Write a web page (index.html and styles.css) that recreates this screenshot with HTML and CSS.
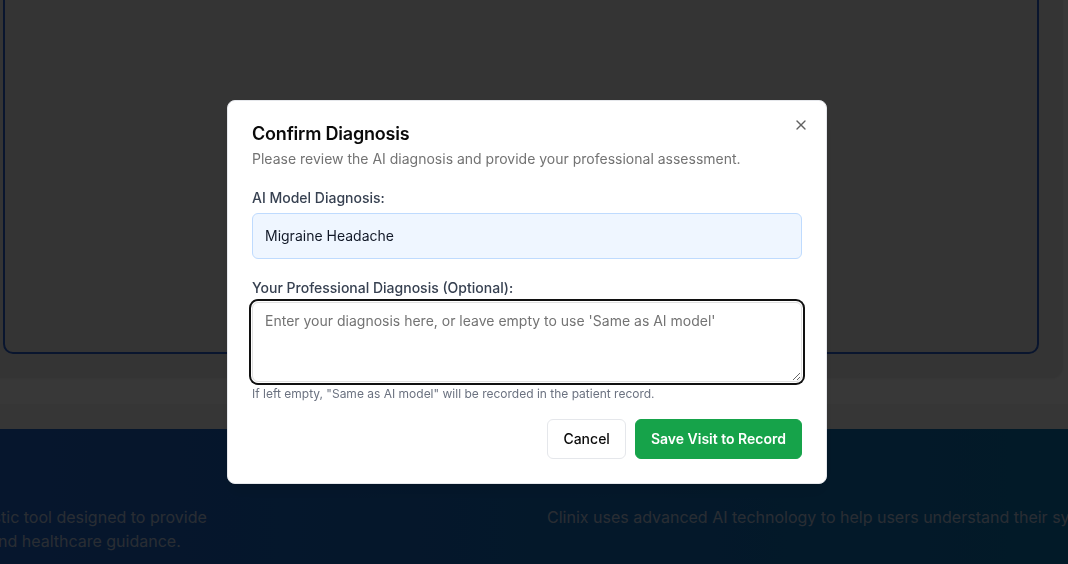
FILE: index.html
```html
<!DOCTYPE html>
<html lang="en">
<head>
<meta charset="utf-8">
<title>Confirm Diagnosis</title>
<link rel="stylesheet" href="styles.css">
</head>
<body>
<div class="page">
  <main class="main">
    <section class="card">
      <div class="panel"></div>
    </section>
  </main>
  <div class="band"></div>
  <footer class="footer">
    <div class="footer-inner">
      <p class="footer-col footer-col-1">Clinix is an AI-powered diagnostic tool designed to provide accurate symptom evaluation and healthcare guidance.</p>
      <p class="footer-col footer-col-2">Clinix uses advanced AI technology to help users understand their symptoms.</p>
    </div>
  </footer>
</div>

<div class="overlay">
  <div class="dialog" role="dialog" aria-labelledby="dlg-title">
    <button class="close" aria-label="Close">
      <svg width="16" height="16" viewBox="0 0 24 24" fill="none" stroke="currentColor" stroke-width="2" stroke-linecap="round" stroke-linejoin="round"><path d="M18 6 6 18"/><path d="m6 6 12 12"/></svg>
    </button>
    <div class="dialog-header">
      <h2 class="dialog-title" id="dlg-title">Confirm Diagnosis</h2>
      <p class="dialog-desc">Please review the AI diagnosis and provide your professional assessment.</p>
    </div>
    <div class="field field-ai">
      <label class="label">AI Model Diagnosis:</label>
      <div class="ai-value">Migraine Headache</div>
    </div>
    <div class="field field-pro">
      <label class="label" for="pro">Your Professional Diagnosis (Optional):</label>
      <textarea id="pro" class="textarea" placeholder="Enter your diagnosis here, or leave empty to use 'Same as AI model'"></textarea>
      <p class="help">If left empty, "Same as AI model" will be recorded in the patient record.</p>
    </div>
    <div class="actions">
      <button class="btn btn-outline">Cancel</button>
      <button class="btn btn-primary">Save Visit to Record</button>
    </div>
  </div>
</div>
</body>
</html>
```

FILE: styles.css
```css
html, body {
  margin: 0;
  padding: 0;
  overflow: hidden;
}
body {
  font-family: Inter, "Noto Sans", "Liberation Sans", sans-serif;
  background: #ffffff;
  width: 1068px;
  height: 564px;
}
* { box-sizing: border-box; }

.page {
  display: flex;
  flex-direction: column;
}

.main {
  padding-bottom: 26px;
  background: #ffffff;
}

.card {
  margin-top: -40px;
  margin-left: -21px;
  width: 1084px;
  padding: 24px;
  background: #ececec;
  border-radius: 12px;
  box-shadow: 0 1px 3px rgba(0,0,0,0.08);
}

.panel {
  height: 370px;
  border: 2px solid #2a5fd0;
  border-radius: 10px;
  background: #ececec;
}

.band {
  height: 25px;
  background: #f5f5f5;
}

.footer {
  height: 200px;
  background: linear-gradient(to right, #1e63cc, #0c76b6);
  padding-top: 76px;
}

.footer-inner {
  display: flex;
  margin-left: -238px;
  gap: 315px;
}

.footer-col {
  margin: 0;
  font-size: 16px;
  line-height: 24px;
  color: #bccde8;
  flex: none;
}
.footer-col-1 { width: 470px; }
.footer-col-2 { width: 760px; }

/* overlay + dialog */
.overlay {
  position: fixed;
  inset: 0;
  background: rgba(0, 0, 0, 0.78);
  display: flex;
  align-items: flex-start;
  justify-content: center;
  padding-right: 14px;
  padding-top: 100px;
}

.dialog {
  position: relative;
  width: 600px;
  background: #ffffff;
  border: 1px solid #e5e7eb;
  border-radius: 8px;
  padding: 24px 24px 24px 24px;
  box-shadow: 0 10px 15px -3px rgba(0,0,0,0.1), 0 4px 6px -4px rgba(0,0,0,0.1);
  display: flex;
  flex-direction: column;
}

.close {
  position: absolute;
  top: 16px;
  right: 17px;
  width: 16px;
  height: 16px;
  padding: 0;
  border: 0;
  background: none;
  color: #3a3a3a;
  opacity: 0.8;
  display: flex;
}

.dialog-header {
  display: flex;
  flex-direction: column;
  gap: 6px;
}

.dialog-title {
  margin: 0;
  font-size: 18px;
  line-height: 18px;
  font-weight: 600;
  color: #0a0a0a;
  letter-spacing: -0.2px;
}

.dialog-desc {
  margin: 0;
  font-size: 14px;
  line-height: 20px;
  color: #737373;
}

.field {
  display: flex;
  flex-direction: column;
}
.field-ai { margin-top: 19px; gap: 5px; }
.field-pro { margin-top: 19px; gap: 4px; }

.label {
  font-size: 14px;
  line-height: 20px;
  font-weight: 500;
  color: #374151;
}

.ai-value {
  height: 46px;
  padding: 12px;
  background: #eff6ff;
  border: 1px solid #bfdbfe;
  border-radius: 6px;
  font-size: 14px;
  line-height: 20px;
  color: #111827;
}

.textarea {
  display: block;
  width: 100%;
  height: 80px;
  padding: 8px 12px;
  border: 1px solid #e0e0e0;
  border-radius: 6px;
  font-family: inherit;
  font-size: 14px;
  line-height: 20px;
  color: #111827;
  background: #ffffff;
  outline: none;
  box-shadow: 0 0 0 1px #ffffff, 0 0 0 3px #101010;
  resize: vertical;
}
.textarea::placeholder { color: #737373; }

.help {
  margin: 0;
  font-size: 12px;
  line-height: 16px;
  color: #6b7280;
}

.actions {
  margin-top: 17px;
  display: flex;
  justify-content: flex-end;
  gap: 9px;
}

.btn {
  height: 40px;
  padding: 0 15px;
  border-radius: 6px;
  font-family: inherit;
  font-size: 14px;
  line-height: 20px;
  font-weight: 500;
  cursor: pointer;
}
.btn-outline {
  background: #ffffff;
  border: 1px solid #e5e7eb;
  color: #0a0a0a;
}
.btn-primary {
  background: #16a34a;
  border: 1px solid #16a34a;
  color: #ffffff;
  font-weight: 600;
}
```
